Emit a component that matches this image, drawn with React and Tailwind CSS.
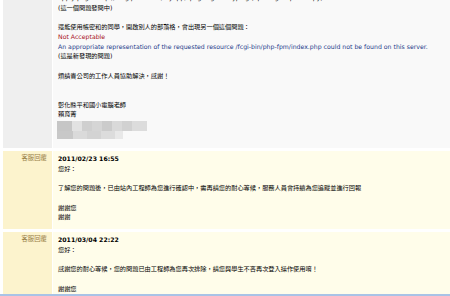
import React from "react";

const mosaicTop = [
  ["w-[15px]", "bg-[#c6c6c6]"],
  ["w-[10px]", "bg-[#e2e2e2]"],
  ["w-[10px]", "bg-[#cfcfcf]"],
  ["w-[10px]", "bg-[#d5d5d5]"],
  ["w-[10px]", "bg-[#cbcbcb]"],
  ["w-[10px]", "bg-[#d9d9d9]"],
  ["w-[10px]", "bg-[#d1d1d1]"],
  ["w-[15px]", "bg-[#dcdcdc]"],
];

const mosaicBottom = [
  ["w-[16px]", "bg-[#c8c8c8]"],
  ["w-[14px]", "bg-[#dadada]"],
  ["w-[14px]", "bg-[#d3d3d3]"],
  ["w-[14px]", "bg-[#dcdcdc]"],
  ["w-[8px]", "bg-[#e8e8e8]"],
];

const Line = ({ children, className = "" }) => (
  <div className={`whitespace-nowrap ${className}`}>{children || "\u00a0"}</div>
);

const Row = ({ label, left, right, className = "", children }) => (
  <div className={`flex ${className}`}>
    <div
      className={`w-[49px] shrink-0 pr-[5px] pt-[3px] text-right text-[6.4px] text-[#9a8048] ${left}`}>
      {label}
    </div>
    <div className={`ml-[1px] flex-1 pl-[5px] ${right}`}>{children}</div>
  </div>
);

export default function App() {
  return (
    <div className="h-[296px] w-[450px] overflow-hidden bg-white font-['DejaVu_Sans','Noto_Sans_CJK_TC',sans-serif] text-[6.2px] leading-[9.7px] text-black">
      <div className="flex h-[294px] flex-col gap-[3px] overflow-hidden pl-[3px]">
        {/* 發問內容 */}
        <Row left="bg-[#efefef]" right="bg-[#f9f9f9] pb-[9px]" className="-mt-[7px]">
          <Line>
            apply page: http://blog.ps.edu.tw/myapp/?page=guest typing (opening a spare copy)
          </Line>
          <Line>(這一個問題發問中)</Line>
          <Line />
          <Line>還能使用帳密和的同學，開啟別人的部落格，會出現另一個這個問題：</Line>
          <Line className="text-[#a8101c]">Not Acceptable</Line>
          <Line className="text-[#1d3b8a]">
            An appropriate representation of the requested resource
            /fcgi-bin/php-fpm/index.php could not be found on this server.
          </Line>
          <Line>(這是新發現的問題)</Line>
          <Line />
          <Line>煩請貴公司的工作人員協助解決，感謝！</Line>
          <Line />
          <Line />
          <Line>彰化縣平和國小電腦老師</Line>
          <Line>賴育菁</Line>
          <div className="mt-[2px] -ml-[1px] flex h-[10px]">
            {mosaicTop.map(([w, bg], i) => (
              <div key={i} className={`${w} ${bg}`} />
            ))}
          </div>
          <div className="-ml-[1px] flex h-[8px]">
            {mosaicBottom.map(([w, bg], i) => (
              <div key={i} className={`${w} ${bg}`} />
            ))}
          </div>
        </Row>

        {/* 客服回覆 1 */}
        <Row
          label="客服回覆"
          left="bg-[#fcf3cd]"
          right="bg-[#fffdea] pt-[3px] pb-[7px]">
          <Line className="font-bold">2011/02/23 16:55</Line>
          <Line>您好：</Line>
          <Line />
          <Line>
            了解您的問題後，已由站內工程師為您進行確認中，需再請您的耐心等候，服務人員會持續為您追蹤並進行回報
          </Line>
          <Line />
          <Line>謝謝您</Line>
          <Line>謝謝</Line>
        </Row>

        {/* 客服回覆 2 */}
        <Row
          label="客服回覆"
          left="bg-[#fcf3cd]"
          right="bg-[#fffdea] pt-[3px] pb-[7px]">
          <Line className="font-bold">2011/03/04 22:22</Line>
          <Line>您好：</Line>
          <Line />
          <Line>
            感謝您的耐心等候，您的問題已由工程師為您再次排除，請您與學生不吝再次登入操作使用唷！
          </Line>
          <Line />
          <Line>謝謝您</Line>
        </Row>
      </div>
      <div className="h-[2px] bg-[#a9c3e6]" />
    </div>
  );
}
